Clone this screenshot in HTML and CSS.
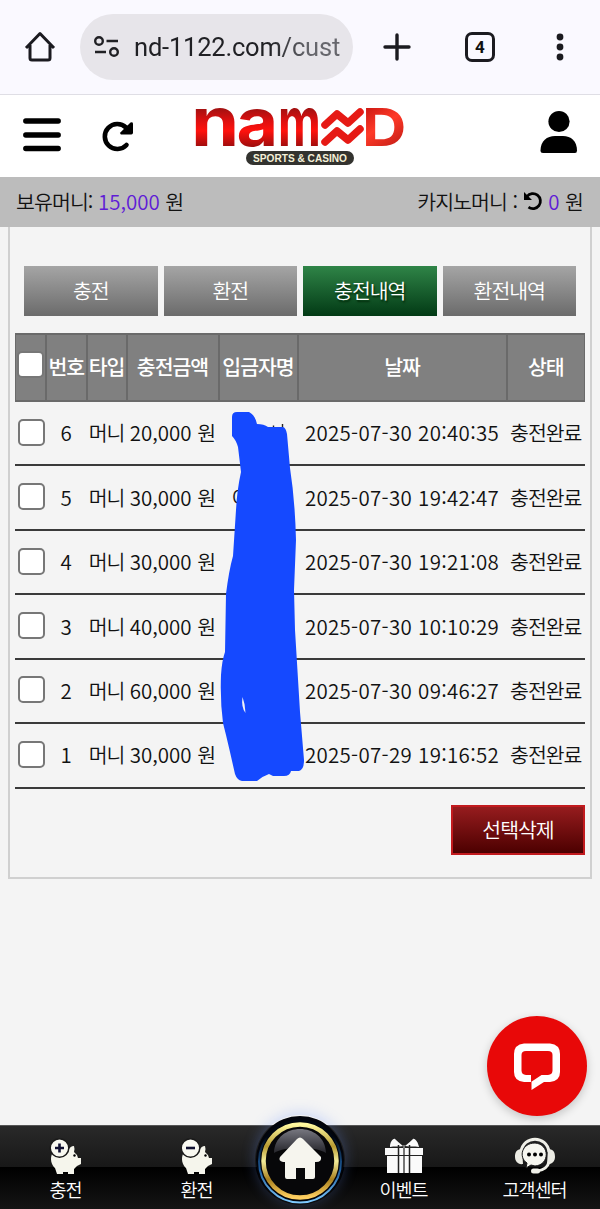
FILE: index.html
```html
<!DOCTYPE html>
<html lang="ko">
<head>
    <meta charset="UTF-8">
    <meta name="viewport" content="width=device-width, initial-scale=1.0">
    <title>충전내역</title>
    <link rel="stylesheet" href="styles.css">
</head>
<body>

    <div class="browser">
        <svg class="b-home" width="32" height="32" viewBox="0 0 32 32"><path d="M2 17 L16 2.5 L30 17 M6 14 V27 Q6 29 8 29 H24 Q26 29 26 27 V14" fill="none" stroke="#1b1b20" stroke-width="3" stroke-linejoin="round"/></svg>
        <div class="url">
            <svg width="26" height="22" viewBox="0 0 26 22" fill="none" stroke="#202024" stroke-width="2.4"><circle cx="5" cy="5" r="3.8"/><path d="M12.5 5H24M1 16H12"/><circle cx="20" cy="16" r="3.8"/></svg>
            <span>nd-1122.com/cust</span>
        </div>
        <svg class="b-plus" width="28" height="28" viewBox="0 0 28 28"><path d="M14 2V26M2 14H26" stroke="#1b1b20" stroke-width="3.4" stroke-linecap="round"/></svg>
        <div class="b-tabs">4</div>
        <svg class="b-dots" width="8" height="28" viewBox="0 0 8 28" fill="#1b1b20"><circle cx="4" cy="4" r="3.4"/><circle cx="4" cy="14" r="3.4"/><circle cx="4" cy="24" r="3.4"/></svg>
    </div>

    <header class="top">
        <svg class="menu" width="38" height="34" viewBox="0 0 38 34"><path d="M2.8 3H35.2M2.8 17H35.2M2.8 30.5H35.2" stroke="#000" stroke-width="5.4" stroke-linecap="round"/></svg>
        <svg class="reload" width="32" height="32" viewBox="0 0 32 32"><path d="M24.5 25A12.5 12.5 0 1 1 24 7.5" fill="none" stroke="#000" stroke-width="4.6" stroke-linecap="round"/><path d="M31 3.2V12.8Q31 14.500 29.300 14.500H19Q17.500 14 18.600 12.200L28.500 2.500Q30.500 1.500 31 3.200Z"/></svg>
        <svg class="logo" width="210" height="60" viewBox="0 0 210 60">
            <defs>
                <linearGradient id="red" gradientUnits="userSpaceOnUse" x1="0" y1="-38" x2="0" y2="0">
                    <stop offset="0" stop-color="#a01111"/>
                    <stop offset="0.3" stop-color="#d81010"/>
                    <stop offset="0.6" stop-color="#ff120d"/>
                    <stop offset="1" stop-color="#a30d0d"/>
                </linearGradient>
                <linearGradient id="red2" gradientUnits="userSpaceOnUse" x1="0" y1="-38" x2="30" y2="0">
                    <stop offset="0" stop-color="#c81712"/>
                    <stop offset="0.5" stop-color="#ff3a28"/>
                    <stop offset="1" stop-color="#c81f17"/>
                </linearGradient>
            </defs>
            <g class="logo-text" fill="url(#red)">
                <text transform="translate(-4 41) scale(1.14 1)" font-size="68">n</text>
                <text transform="translate(41.5 41) scale(1.07 1)" font-size="67">a</text>
                <text transform="translate(83 41) scale(.69 1)" font-size="68">m</text>
                <text transform="translate(167 41) scale(1.18 1)" font-size="52" fill="url(#red2)">D</text>
            </g>
            <path d="M130 20L142 9L153 18L165 7M130 37L142 26L153 35L165 24" fill="none" stroke="#e61a15" stroke-width="7.5" stroke-linecap="round" stroke-linejoin="round"/>
            <rect x="51" y="46" width="108" height="14" rx="7" fill="#33332f"/>
            <text class="logo-sub" x="58" y="56.7" textLength="94" lengthAdjust="spacingAndGlyphs">SPORTS &amp; CASINO</text>
        </svg>
        <svg class="user" width="38" height="44" viewBox="0 0 38 44"><circle cx="19" cy="11.5" r="10.6"/><path d="M.5 40.5C.5 31 7 26 15 26H23C31 26 37 31 37 40.5Q37 43 35 43H3Q.5 43 .5 40.5Z"/></svg>
    </header>

    <div class="money">
        <p>보유머니: <b>15,000</b> 원</p>
        <p>카지노머니 : <svg width="20" height="20" viewBox="0 0 20 20"><path d="M4 5.5A7.5 7.5 0 1 1 5.5 16.2" fill="none" stroke="#000" stroke-width="2.8"/><path d="M1 1V9H9Z"/></svg> <b>0</b> 원</p>
    </div>

    <main class="content">
        <div class="tabs">
            <a>충전</a>
            <a>환전</a>
            <a class="on">충전내역</a>
            <a>환전내역</a>
        </div>

        <table class="list">
            <thead>
                <tr><th><i class="check"></i></th><th>번호</th><th>타입</th><th>충전금액</th><th>입금자명</th><th>날짜</th><th>상태</th></tr>
            </thead>
            <tbody>
                <tr><td><i class="check"></i></td><td>6</td><td>머니</td><td>20,000 원</td><td></td><td>2025-07-30 20:40:35</td><td>충전완료</td></tr>
                <tr><td><i class="check"></i></td><td>5</td><td>머니</td><td>30,000 원</td><td class="name">이</td><td>2025-07-30 19:42:47</td><td>충전완료</td></tr>
                <tr><td><i class="check"></i></td><td>4</td><td>머니</td><td>30,000 원</td><td></td><td>2025-07-30 19:21:08</td><td>충전완료</td></tr>
                <tr><td><i class="check"></i></td><td>3</td><td>머니</td><td>40,000 원</td><td></td><td>2025-07-30 10:10:29</td><td>충전완료</td></tr>
                <tr><td><i class="check"></i></td><td>2</td><td>머니</td><td>60,000 원</td><td></td><td>2025-07-30 09:46:27</td><td>충전완료</td></tr>
                <tr><td><i class="check"></i></td><td>1</td><td>머니</td><td>30,000 원</td><td></td><td>2025-07-29 19:16:52</td><td>충전완료</td></tr>
            </tbody>
        </table>

        <button class="delete">선택삭제</button>
    </main>

    <!-- depositor names are painted over -->
    <svg class="scribble" width="90" height="375" viewBox="215 408 90 375">
        <path d="M273.5 428V425.5M282.5 428V424" stroke="#222" stroke-width="1.4"/>
        <path d="M232 417Q232 412 237 412H249Q255 415 257 424Q264 424 268 427H283Q286 428 287 434L290 468Q295 500 296 540L294 590L295 630L300 712L304 760Q304 770 299 771H291Q290 776 284 776H273L269 774Q263 776 257 781H242Q237 780 235 774L230 752L226 735L223 723Q220 700 221 675Q222 660 225 652L226 594Q229 570 233 556L236 510Q237 490 241 472L238 447Q236 440 232 436Z" fill="#1549ff"/>
        <path d="M242.5 697Q241 707 245.5 713L244.5 704Z" fill="#f4f4f4"/>
    </svg>

    <div class="chat">
        <svg width="48" height="48" viewBox="0 0 48 48"><path fill="#fff" fill-rule="evenodd" d="M11 1.5H37Q47 2.5 47 12V30Q47 39 37 40H31L18.5 48V40H11Q1 39 1 30V12Q1 2.5 11 1.5ZM13 9Q8.5 9 8.5 13V28.5Q8.5 32.5 13 33H18V40L28.5 33H35Q39.5 32.5 39.5 28.5V13Q39.5 9 35 9Z"/></svg>
    </div>

    <nav class="bottom">
        <a>
            <svg width="34" height="38" viewBox="0 0 34 38"><path d="M3 17C6 13 14 12 19 14Q21 9 25 9Q26 12 25 15L28 18L29 21H32V27L28 29L25 32V37H19V35H14V37H8L6 31C2 28 1 21 3 17Z" fill="#f5f5ec"/><circle cx="25.5" cy="18.5" r="1.2"/><circle cx="10.5" cy="11" r="9.3" fill="#f8f8f0" stroke="#1a1a1a" stroke-width="1.5"/><path d="M10.5 6.5V15.5M6 11H15" stroke="#101030" stroke-width="2.6"/></svg>
            <span>충전</span>
        </a>
        <a>
            <svg width="34" height="38" viewBox="0 0 34 38"><path d="M3 17C6 13 14 12 19 14Q21 9 25 9Q26 12 25 15L28 18L29 21H32V27L28 29L25 32V37H19V35H14V37H8L6 31C2 28 1 21 3 17Z" fill="#f5f5ec"/><circle cx="25.5" cy="18.5" r="1.2"/><circle cx="10.5" cy="11" r="9.3" fill="#f8f8f0" stroke="#1a1a1a" stroke-width="1.5"/><path d="M6 11H15" stroke="#101030" stroke-width="2.6"/></svg>
            <span>환전</span>
        </a>
        <div class="home">
            <svg width="90" height="90" viewBox="0 0 90 90">
                <defs>
                    <linearGradient id="gold" x1="0" y1="0" x2="0" y2="1"><stop offset="0" stop-color="#fff9a0"/><stop offset=".3" stop-color="#b79a31"/><stop offset=".5" stop-color="#f4ed9a"/><stop offset=".75" stop-color="#a8801f"/><stop offset="1" stop-color="#ffcf60"/></linearGradient>
                    <linearGradient id="blue" x1="0" y1="0" x2="0" y2="1"><stop offset=".2" stop-color="#000712"/><stop offset=".6" stop-color="#1d5c9c"/><stop offset="1" stop-color="#7fcaff"/></linearGradient>
                    <linearGradient id="shine" x1="0" y1="0" x2="0" y2="1"><stop offset="0" stop-color="#777780"/><stop offset="1" stop-color="#25252b"/></linearGradient>
                </defs>
                <circle cx="45" cy="45" r="44" fill="#02040b"/>
                <circle cx="45" cy="46.5" r="41" fill="none" stroke="url(#blue)" stroke-width="2"/>
                <circle cx="45" cy="46" r="36.5" fill="#070709" stroke="url(#gold)" stroke-width="4.5"/>
                <path d="M19 38C20 6 70 6 71 38C60 31 30 31 19 38Z" fill="url(#shine)"/>
                <path d="M42 24Q45 21 48 24L66 42Q67 47 61 47H60V62Q60 64 58 64H50V53H41V64H32Q30 64 30 62V47H28Q23 46 25 42Z" fill="#f6f5ee"/>
            </svg>
        </div>
        <a>
            <svg width="40" height="38" viewBox="0 0 40 38" fill="#fafafa"><path d="M20 9C14 10 10 9 6 10C6 5 9 1 11 2Q14 5 19 9M21 9C27 10 30 9 35 10C34 5 31 1 29 2Q26 5 21 9M1 11H39V18H1ZM3 19H38V36H3Z"/><path d="M14.5 8V36M25.5 8V36" stroke="#222" stroke-width="1.5"/><path d="M20 8V36" stroke="#777" stroke-width="2"/><path d="M1 18.5H39" stroke="#222"/></svg>
            <span>이벤트</span>
        </a>
        <a>
            <svg width="42" height="38" viewBox="0 0 42 38"><path d="M7 15C9 -2 33 -2 35 15" fill="none" stroke="#f0f0e8" stroke-width="3"/><path d="M8 12C2 12 1 16 1 20S4 28 9 27ZM34 12C40 12 41 16 41 20S38 28 33 27Z" fill="#ecece4"/><path d="M35 25Q33 33 23 34" fill="none" stroke="#f0f0e8" stroke-width="3"/><rect x="17" y="31.5" width="9" height="5" rx="2.5" fill="#f0f0e8"/><path d="M21 6C36 7 36 28 21 29L17 28L12 31L13 26C4 20 8 6 21 6Z" fill="#f7f7f0" stroke="#1a1a1a"/><circle cx="15" cy="17.5" r="2"/><circle cx="21" cy="17.5" r="2"/><circle cx="27" cy="17.5" r="2"/></svg>
            <span>고객센터</span>
        </a>
    </nav>

</body>
</html>
```
FILE: styles.css
```css
* {
    box-sizing: border-box;
}

body {
    font-family: "Noto Sans CJK KR", sans-serif;
    font-weight: 350;
    font-size: 20.5px;
    color: #111;
    background-color: #f4f4f4;
    margin: 0;
    height: 1209px;
    display: flex;
    flex-direction: column;
    position: relative;
    overflow: hidden;
}

svg {
    display: block;
    flex: none;
}

/* browser bar */
.browser {
    height: 95px;
    background: #faf9ff;
    border-bottom: 1px solid #dfdee5;
    display: flex;
    align-items: center;
    padding-left: 24px;
}

.url {
    width: 273px;
    height: 66px;
    margin-left: 24px;
    padding-left: 14px;
    border-radius: 33px;
    background: #e7e5ea;
    display: flex;
    align-items: center;
    gap: 14px;
    font: 400 25.5px Roboto, sans-serif;
    letter-spacing: -0.2px;
    white-space: nowrap;
}

.url span {
    background: linear-gradient(90deg, #202024 65%, #66666c 85%);
    background-clip: text;
    -webkit-background-clip: text;
    color: transparent;
}

.b-plus {
    margin-left: 30px;
}

.b-tabs {
    width: 30px;
    height: 30px;
    margin-left: 54px;
    border: 3px solid #1b1b20;
    border-radius: 7px;
    font: 700 17px/25px Roboto, sans-serif;
    text-align: center;
}

.b-dots {
    margin-left: 61px;
}

/* site header */
.top {
    height: 82px;
    background: #fff;
    display: flex;
    align-items: flex-start;
    padding: 13px 0 0 23px;
}

.menu {
    margin-top: 10px;
}

.reload {
    margin: 12px 0 0 41px;
}

.logo {
    margin-left: 61px;
    margin-top: -3px;
    overflow: visible;
}

.logo-text {
    font-family: Inter, sans-serif;
    font-weight: 700;
}

.logo-sub {
    font: 700 10.5px "Liberation Sans", sans-serif;
    fill: #f5f0d8;
}

.user {
    margin: 2px 0 0 135px;
}

.money {
    height: 50px;
    background: #bcbcbc;
    display: flex;
    justify-content: space-between;
    align-items: center;
    padding: 0 17px 2px 16px;
}

.money p {
    margin: 0;
    letter-spacing: -0.9px;
    word-spacing: 0.7px;
    white-space: nowrap;
}

.money b {
    font-weight: 350;
    letter-spacing: 0;
    color: #5f1bd6;
}

.money svg {
    display: inline-block;
    vertical-align: -1px;
}

/* deposit history */
.content {
    width: 584px;
    height: 652px;
    margin-left: 8px;
    padding: 39px 5px 0;
    border: 2px solid #d0d0d0;
    border-top: 0;
    display: flex;
    flex-direction: column;
}

.tabs {
    display: grid;
    grid-template-columns: repeat(4, 1fr);
    gap: 6px;
    padding: 0 9px;
}

.tabs a {
    height: 50px;
    line-height: 48px;
    text-align: center;
    letter-spacing: -1px;
    color: #fff;
    background: linear-gradient(#a5a5a5, #6b6b6b);
}

.tabs .on {
    background: linear-gradient(#2f8447, #023a15);
    text-shadow: 1px 2px 2px #002808;
}

.list {
    display: block;
    margin-top: 17px;
}

.list thead,
.list tbody {
    display: block;
}

.list tr {
    display: grid;
    grid-template-columns: 31px 40.5px 40px 92px 79px 209px 78.5px;
    width: 570px;
}

.list th,
.list td {
    display: flex;
    justify-content: center;
    align-items: center;
    padding: 0;
    white-space: nowrap;
}

.list th {
    height: 69px;
    background: #808080;
    border: 1px solid #6a6a6a;
    border-width: 2px 1px;
    padding-bottom: 3px;
    color: #fff;
    font-weight: 500;
    letter-spacing: -1px;
}

.list td {
    height: 64.45px;
    padding-bottom: 2px;
    border-bottom: 2px solid #3a3a3a;
}

.list td:first-child {
    padding-left: 1px;
}

.list td:nth-child(3),
.list td:last-child {
    letter-spacing: -1px;
}

.list td:nth-child(4) {
    padding-left: 1px;
}

.list td:nth-child(6) {
    letter-spacing: 0.3px;
}

.list .name {
    justify-content: flex-start;
    padding-left: 13px;
}

.check {
    width: 27px;
    height: 27px;
    background: #fff;
    border: 2px solid #777;
    border-radius: 5px;
}

th .check {
    margin-top: -3px;
}

.delete {
    width: 134px;
    height: 50px;
    margin: 16px 0 0;
    align-self: flex-end;
    border: 2px solid #c21a1e;
    background: linear-gradient(#961c1e, #4c0000);
    color: #fff;
    font: inherit;
    letter-spacing: -1px;
    padding: 0 0 2px;
}

.scribble {
    position: absolute;
    left: 215px;
    top: 408px;
}

/* live chat button */
.chat {
    position: absolute;
    left: 487px;
    top: 1016px;
    width: 100px;
    height: 100px;
    border-radius: 50%;
    background: #e80808;
    box-shadow: 0 3px 10px rgba(0, 0, 0, 0.2);
    display: flex;
    justify-content: center;
    align-items: center;
}

.bottom {
    margin-top: auto;
    height: 84px;
    border-top: 1px solid #555;
    background: linear-gradient(#292929, #181818 49%, #000 50%, #151515);
    display: grid;
    grid-template-columns: 131px 131px 76px 131px 131px;
}

.bottom a {
    display: flex;
    flex-direction: column;
    align-items: center;
    padding-top: 11px;
    color: #fff;
    font-size: 18.5px;
    line-height: 28px;
    letter-spacing: -1px;
}

.home {
    margin: -11px 0 0 -7px;
    width: 90px;
    height: 90px;
    border-radius: 50%;
    box-shadow: 0 -2px 14px rgba(110, 150, 255, 0.3);
}
```
